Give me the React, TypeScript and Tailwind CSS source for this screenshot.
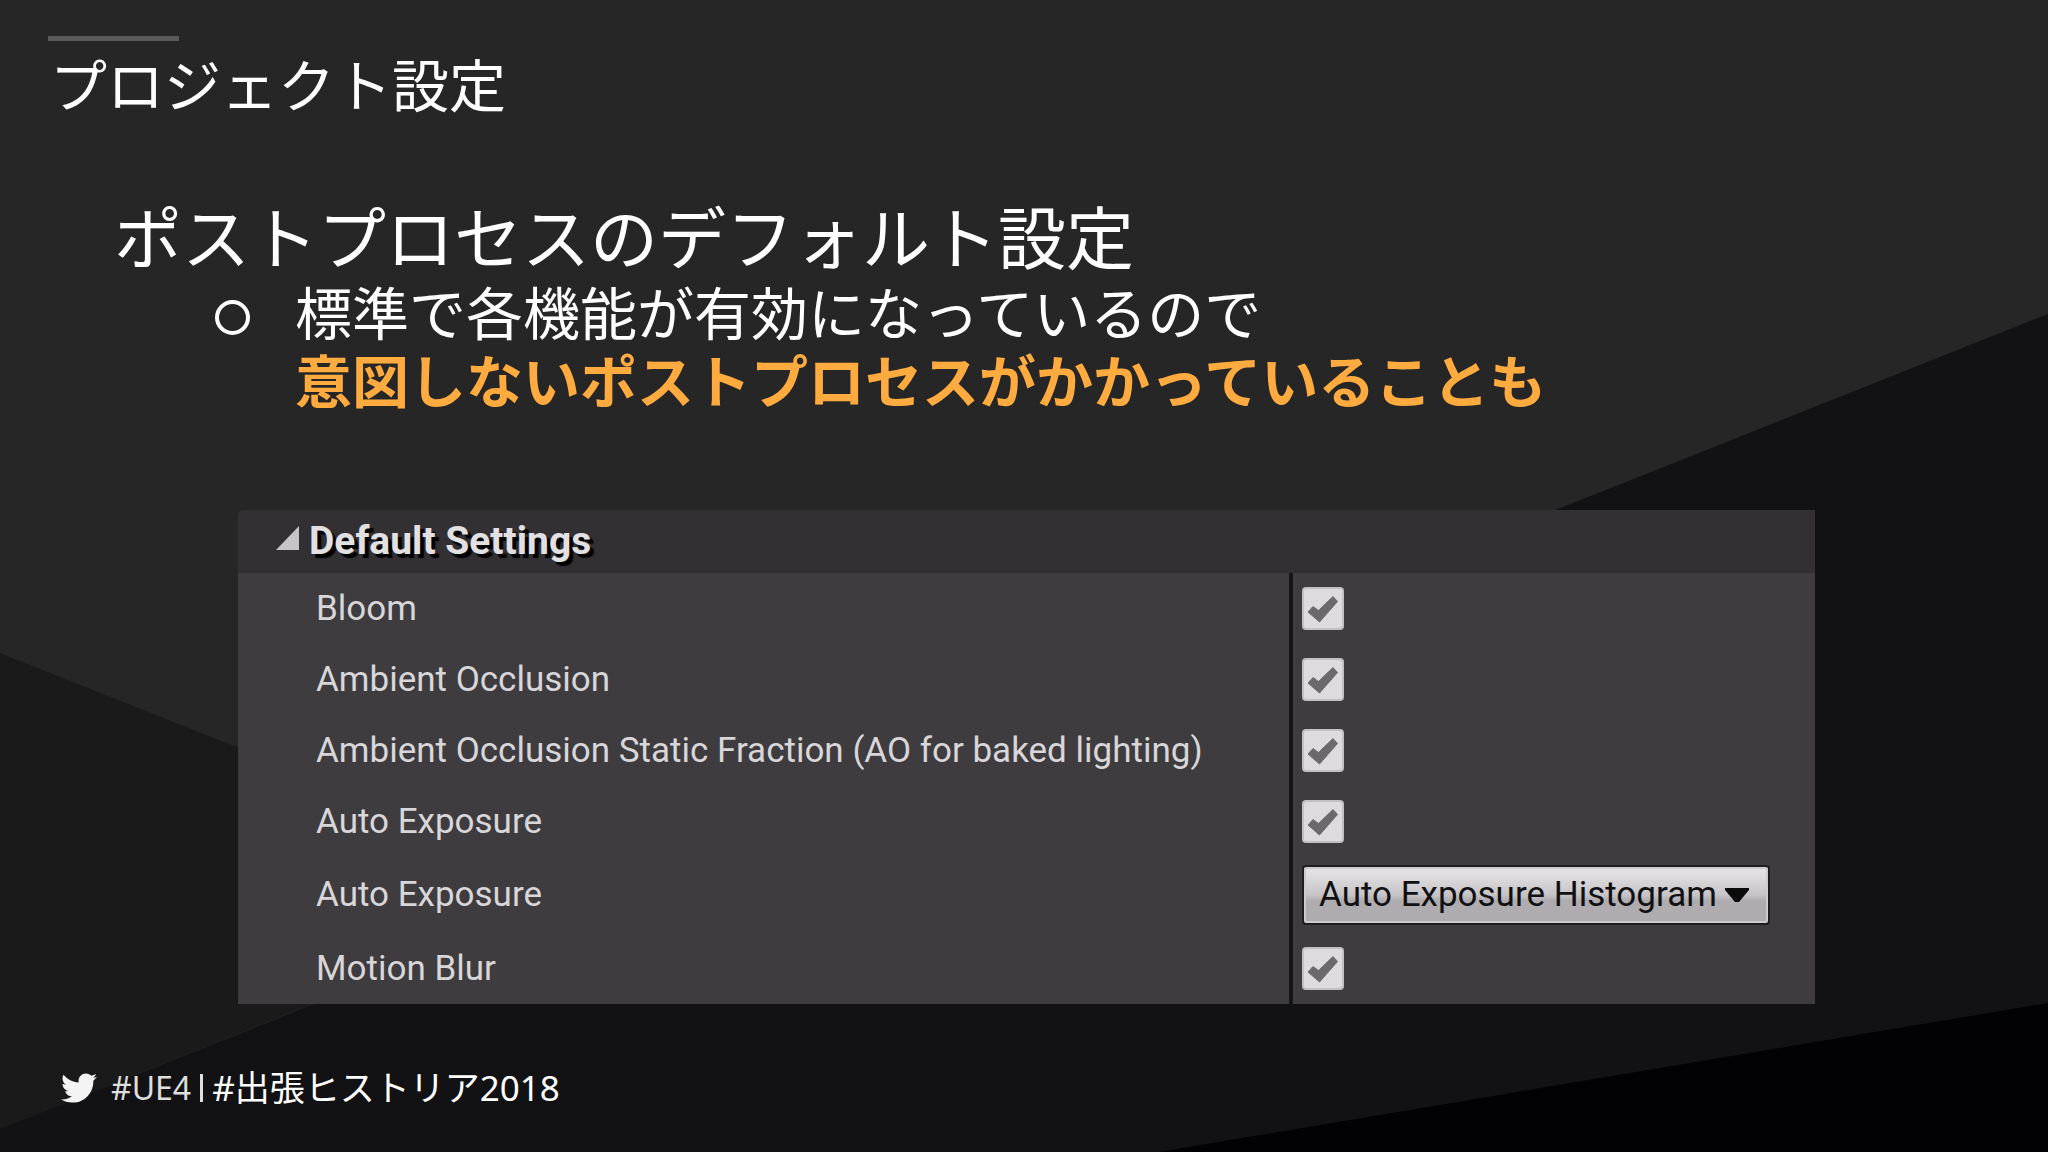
import { useState } from 'react';
import { FaTwitter } from 'react-icons/fa';

interface Setting {
  id: string;
  label: string;
  type: 'checkbox' | 'select';
}

const SETTINGS: Setting[] = [
  { id: 'bloom', label: 'Bloom', type: 'checkbox' },
  { id: 'ao', label: 'Ambient Occlusion', type: 'checkbox' },
  { id: 'ao-static', label: 'Ambient Occlusion Static Fraction (AO for baked lighting)', type: 'checkbox' },
  { id: 'exposure', label: 'Auto Exposure', type: 'checkbox' },
  { id: 'exposure-method', label: 'Auto Exposure', type: 'select' },
  { id: 'motion-blur', label: 'Motion Blur', type: 'checkbox' },
];

function Backdrop() {
  return (
    <svg
      className="absolute inset-0 h-full w-full"
      viewBox="0 0 2048 1152"
      preserveAspectRatio="none"
      aria-hidden="true"
    >
      <rect width="2048" height="1152" fill="#262626" />
      <polygon points="0,653 597,890 0,1129" fill="#1a1a1a" />
      <polygon points="0,1129 2048,314 2048,1152 0,1152" fill="#121113" />
      <polygon points="1159,1152 2048,1003 2048,1152" fill="#020103" />
    </svg>
  );
}

function CheckControl({ id }: { id: string }) {
  const [checked, setChecked] = useState(true);

  return (
    <span className="relative block h-[43px] w-[42px]">
      <input
        id={id}
        type="checkbox"
        checked={checked}
        onChange={(e) => setChecked(e.target.checked)}
        className="block h-full w-full appearance-none rounded-sm border-2 border-[#c2c0c3] bg-[#dddbde]"
      />
      {checked && (
        <svg className="pointer-events-none absolute inset-0 h-full w-full" viewBox="0 0 42 43">
          <path d="M6 25 L11 19.5 L16.5 23.5 L31 9.5 L35.5 14.5 L17.5 35 Z" fill="#6b696c" stroke="#6b696c" strokeLinejoin="round" />
        </svg>
      )}
    </span>
  );
}

function SelectControl({ id }: { id: string }) {
  return (
    <span className="relative block w-[468px]">
      <select
        id={id}
        className="block h-[60px] w-full appearance-none rounded-sm border-2 border-[#1e1d1f] bg-linear-to-b from-[#e2e0e3] from-10% via-[#c6c4c7] via-50% to-[#aeacaf] to-60% pl-[15px] text-[35px] text-[#111012] shadow-[inset_0_0_0_2px_#cdcbce]"
      >
        <option>Auto Exposure Histogram</option>
        <option>Auto Exposure Basic</option>
      </select>
      <svg className="pointer-events-none absolute top-[22px] right-[21px] h-4 w-6" viewBox="0 0 24 16">
        <path d="M0 1 H24 V3 L14 15 H10 L0 3 Z" fill="#0a0a0a" />
      </svg>
    </span>
  );
}

function SettingsPanel() {
  return (
    <section className="overflow-hidden rounded-tl-md bg-[#3e3c3f] font-[Roboto,sans-serif]">
      <h3 className="bg-[#323033]">
        <button type="button" className="flex h-[63px] w-full items-center gap-[9px] pl-[38px]">
          <svg className="mb-2 h-6 w-6" viewBox="0 0 24 24">
            <path d="M23 0 V24 H0 Z" fill="#c6c4c7" />
          </svg>
          <span className="text-[39px] leading-none font-bold text-[#e2e0e3] [text-shadow:4px_4px_1px_#000]">
            Default Settings
          </span>
        </button>
      </h3>
      <table className="w-full table-fixed border-separate border-spacing-0">
        <colgroup>
          <col />
          <col className="w-[522px]" />
        </colgroup>
        <tbody>
          {SETTINGS.map((setting) => (
            <tr key={setting.id} className={setting.type === 'select' ? 'h-[76px]' : 'h-[71px]'}>
              <th scope="row" className="border-r-4 border-[#151416] pl-[78px] text-left font-normal">
                <label htmlFor={setting.id} className="block text-[35px] leading-10 text-[#d8d6d9]">
                  {setting.label}
                </label>
              </th>
              <td className="pl-[9px]">
                {setting.type === 'select' ? <SelectControl id={setting.id} /> : <CheckControl id={setting.id} />}
              </td>
            </tr>
          ))}
        </tbody>
      </table>
    </section>
  );
}

export default function App() {
  return (
    <main
      lang="ja"
      className="relative isolate flex min-h-screen flex-col bg-[#262626] font-['Noto_Sans_CJK_JP',sans-serif] text-white"
    >
      <Backdrop />

      <header className="relative pt-9 pl-12">
        <div className="h-[5px] w-[131px] bg-[#5a5a5a]" />
        <h1 className="mt-[7px] pl-[2px] text-[57px] leading-[68px]">プロジェクト設定</h1>
      </header>

      <div className="relative mt-[78px] pl-[114px]">
        <h2 className="text-[68px] leading-[82px]">ポストプロセスのデフォルト設定</h2>
        <ul>
          <li className="flex gap-[45px] pl-[101px] text-[57px] leading-[68px]">
            <span className="mt-6 size-[35px] shrink-0 rounded-full border-4 border-white" />
            <p>
              標準で各機能が有効になっているので
              <br />
              <strong className="font-bold text-[#ffab40]">意図しないポストプロセスがかかっていることも</strong>
            </p>
          </li>
        </ul>
      </div>

      <div className="relative mt-[98px] mr-[233px] ml-[238px]">
        <SettingsPanel />
      </div>

      <footer className="relative mt-auto flex items-center pb-[38px] pl-[61px] leading-[52px]">
        <FaTwitter className="size-9 text-[#f4f4f4]" />
        <span className="ml-[14px] font-['Noto_Sans',sans-serif] text-[32px] text-[#dedede]">#UE4</span>
        <span className="ml-[9px] h-7 w-[3px] bg-[#dedede]" />
        <span className="ml-[9px] font-['Noto_Sans','Noto_Sans_CJK_JP',sans-serif] text-[35px]">#出張ヒストリア2018</span>
      </footer>
    </main>
  );
}
